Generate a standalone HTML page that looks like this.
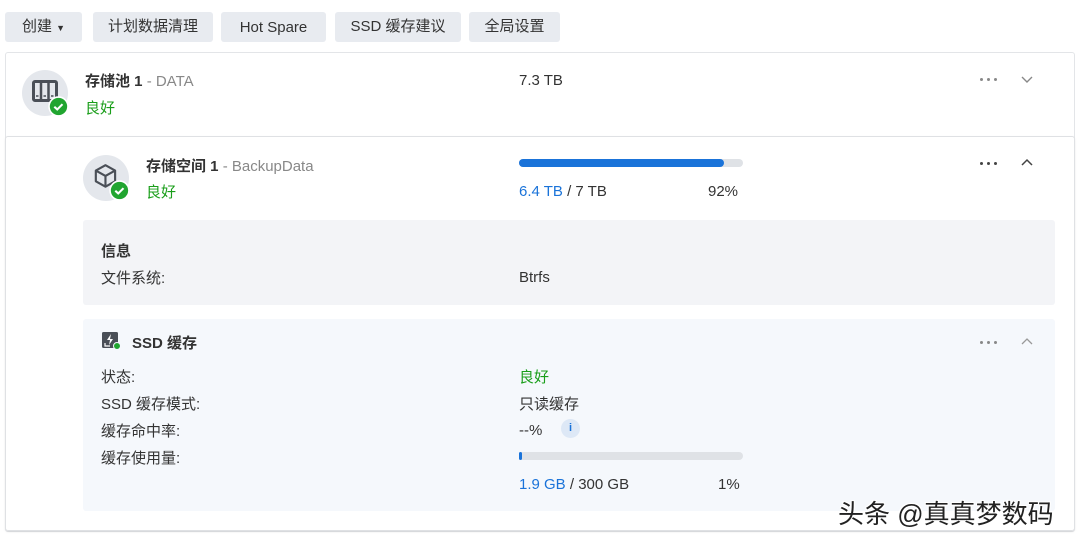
<!DOCTYPE html>
<html><head><meta charset="utf-8"><style>
*{margin:0;padding:0;box-sizing:border-box}
body{width:1080px;height:539px;background:#fff;position:relative;overflow:hidden;font-family:"Liberation Sans","Noto Sans CJK SC",sans-serif;font-size:15px;color:#333}
.a{position:absolute;white-space:nowrap}
.btn{position:absolute;top:12px;height:30px;background:#e8ebf0;border-radius:3px;line-height:30px;text-align:center;font-size:15px;color:#333}
.g{color:#1a9e1a}
.bl{color:#1a73d9}
.gr{color:#888}
.b{font-weight:bold}
.dots{position:absolute;width:18px;height:4px}
.dots i{position:absolute;top:0;width:3px;height:3px;border-radius:50%;background:#888}
</style></head><body>
<div class="btn" style="left:5px;width:77px">创建 <span style="font-size:9px">▼</span></div>
<div class="btn" style="left:93px;width:120px">计划数据清理</div>
<div class="btn" style="left:221px;width:105px;line-height:32px">Hot Spare</div>
<div class="btn" style="left:335px;width:126px">SSD 缓存建议</div>
<div class="btn" style="left:469px;width:91px">全局设置</div>

<div class="a" style="left:5px;top:52px;width:1070px;height:480px;border:1px solid #e3e5e8;border-radius:3px"></div>
<div class="a" style="left:5px;top:136px;width:1070px;height:395px;border:1px solid #dfe1e4;border-radius:3px;box-shadow:0 1px 2px rgba(0,0,0,.08)"></div>

<div class="a" style="left:22px;top:70px;width:46px;height:46px;border-radius:50%;background:#e4e7ec"></div>
<svg class="a" style="left:30px;top:78px" width="30" height="30" viewBox="0 0 30 30"><rect x="3.5" y="3.5" width="23" height="19" rx="1.5" fill="none" stroke="#4a4f57" stroke-width="3"/><line x1="11" y1="4" x2="11" y2="23" stroke="#4a4f57" stroke-width="2.5"/><line x1="18.5" y1="4" x2="18.5" y2="23" stroke="#4a4f57" stroke-width="2.5"/><line x1="6" y1="18" x2="8.5" y2="18" stroke="#4a4f57" stroke-width="1.5"/><line x1="13.5" y1="18" x2="16" y2="18" stroke="#4a4f57" stroke-width="1.5"/><line x1="21" y1="18" x2="23.5" y2="18" stroke="#4a4f57" stroke-width="1.5"/></svg>
<svg class="a" style="left:48px;top:96px" width="21" height="21" viewBox="0 0 20 20"><circle cx="10" cy="10" r="9" fill="#21a530" stroke="#fff" stroke-width="1.5"/><path d="M6 10.2l2.8 2.6 5-5" fill="none" stroke="#fff" stroke-width="2"/></svg>
<div class="a" style="left:85px;top:70px"><span class="b">存储池 1</span> <span class="gr">- DATA</span></div>
<div class="a g" style="left:85px;top:97px">良好</div>
<div class="a" style="left:519px;top:72px">7.3 TB</div>
<div class="dots" style="left:980px;top:78px"><i style="left:0"></i><i style="left:7px"></i><i style="left:14px"></i></div>
<svg class="a" style="left:1020px;top:73px" width="14" height="12" viewBox="0 0 14 12"><path d="M2 4l5 5 5-5" fill="none" stroke="#888" stroke-width="1.4"/></svg>

<div class="a" style="left:83px;top:155px;width:46px;height:46px;border-radius:50%;background:#e4e7ec"></div>
<svg class="a" style="left:91px;top:162px" width="30" height="30" viewBox="0 0 28 28"><path d="M13.5 3l9 5v10l-9 5-9-5V8z M4.5 8l9 5 9-5 M13.5 13v10" fill="none" stroke="#4a4f57" stroke-width="2" stroke-linejoin="round"/></svg>
<svg class="a" style="left:109px;top:180px" width="21" height="21" viewBox="0 0 20 20"><circle cx="10" cy="10" r="9" fill="#21a530" stroke="#fff" stroke-width="1.5"/><path d="M6 10.2l2.8 2.6 5-5" fill="none" stroke="#fff" stroke-width="2"/></svg>
<div class="a" style="left:146px;top:155px"><span class="b">存储空间 1</span> <span class="gr">- BackupData</span></div>
<div class="a g" style="left:146px;top:181px">良好</div>
<div class="a" style="left:519px;top:159px;width:224px;height:8px;border-radius:4px;background:#dfe2e6"><div style="width:205px;height:8px;border-radius:4px;background:#1a73d9"></div></div>
<div class="a" style="left:519px;top:183px"><span class="bl">6.4 TB</span> / 7 TB</div>
<div class="a" style="left:708px;top:183px">92%</div>
<div class="dots" style="left:980px;top:162px"><i style="left:0;background:#444"></i><i style="left:7px;background:#444"></i><i style="left:14px;background:#444"></i></div>
<svg class="a" style="left:1020px;top:156px" width="14" height="12" viewBox="0 0 14 12"><path d="M2 9l5-5 5 5" fill="none" stroke="#444" stroke-width="1.5"/></svg>

<div class="a" style="left:83px;top:220px;width:972px;height:85px;background:#f3f4f7;border-radius:3px"></div>
<div class="a b" style="left:101px;top:240px">信息</div>
<div class="a" style="left:101px;top:267px">文件系统:</div>
<div class="a" style="left:519px;top:269px">Btrfs</div>

<div class="a" style="left:83px;top:319px;width:972px;height:192px;background:#f5f8fc;border-radius:3px"></div>
<svg class="a" style="left:101px;top:331px" width="22" height="20" viewBox="0 0 22 20"><rect x="1" y="1" width="16" height="16" rx="1.5" fill="#4a4f57"/><path d="M10 3l-4 6h3l-1 5 4-6h-3z" fill="#fff"/><path d="M4 12v3h5" fill="none" stroke="#fff" stroke-width="1.2"/><circle cx="16" cy="15" r="3.5" fill="#21a530" stroke="#f5f8fc" stroke-width="1"/></svg>
<div class="a b" style="left:132px;top:332px">SSD 缓存</div>
<div class="dots" style="left:980px;top:341px"><i style="left:0"></i><i style="left:7px"></i><i style="left:14px"></i></div>
<svg class="a" style="left:1020px;top:335px" width="14" height="12" viewBox="0 0 14 12"><path d="M2 9l5-5 5 5" fill="none" stroke="#999" stroke-width="1.3"/></svg>
<div class="a" style="left:101px;top:366px">状态:</div>
<div class="a g" style="left:519px;top:366px">良好</div>
<div class="a" style="left:101px;top:393px">SSD 缓存模式:</div>
<div class="a" style="left:519px;top:393px">只读缓存</div>
<div class="a" style="left:101px;top:420px">缓存命中率:</div>
<div class="a" style="left:519px;top:422px">--%</div>
<div class="a" style="left:561px;top:419px;width:19px;height:19px;border-radius:50%;background:#dde8f6;color:#1a73d9;font-size:11px;font-weight:bold;text-align:center;line-height:19px">i</div>
<div class="a" style="left:101px;top:447px">缓存使用量:</div>
<div class="a" style="left:519px;top:452px;width:224px;height:8px;border-radius:4px;background:#dfe2e6"><div style="width:3px;height:8px;border-radius:4px;background:#1a73d9"></div></div>
<div class="a" style="left:519px;top:476px"><span class="bl">1.9 GB</span> / 300 GB</div>
<div class="a" style="left:718px;top:476px">1%</div>

<div class="a" style="left:838px;top:494px;font-size:26px;color:#222;text-shadow:1px 1px 0 #fff,-1px -1px 0 #fff,1px -1px 0 #fff,-1px 1px 0 #fff">头条 @真真梦数码</div>
</body></html>
